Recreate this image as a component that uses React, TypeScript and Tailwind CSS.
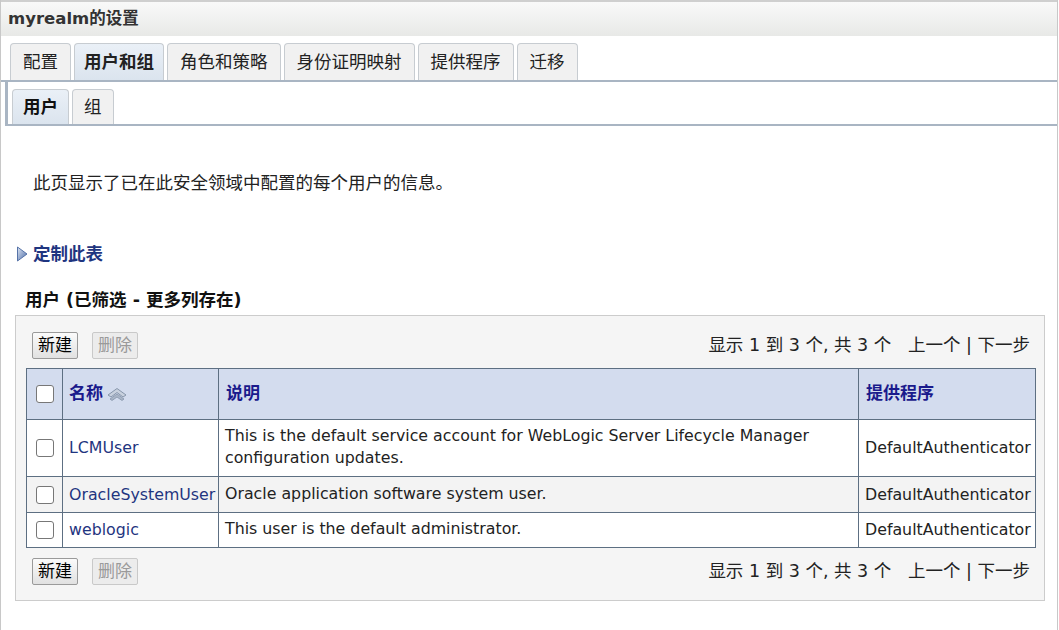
import React from "react";

const font = { fontFamily: '"DejaVu Sans", "Noto Sans CJK SC", sans-serif' };

const tabs = ["配置", "用户和组", "角色和策略", "身份证明映射", "提供程序", "迁移"];

const users = [
  {
    name: "LCMUser",
    desc: "This is the default service account for WebLogic Server Lifecycle Manager configuration updates.",
    provider: "DefaultAuthenticator",
  },
  { name: "OracleSystemUser", desc: "Oracle application software system user.", provider: "DefaultAuthenticator" },
  { name: "weblogic", desc: "This user is the default administrator.", provider: "DefaultAuthenticator" },
];

const Tab = ({ label, active }: { label: string; active?: boolean }) => (
  <div
    className={
      "h-[37px] flex items-center rounded-t-[4px] border border-b-0 border-[#c7ccd1] text-[17.5px] text-[#222] " +
      (active ? "px-[9px] bg-gradient-to-b from-[#eaf0f7] to-[#dbe4ee] font-bold text-[#111]" : "px-[12px] bg-[#f1f1f1]")
    }
  >
    {label}
  </div>
);

const Buttons = () => (
  <div className="flex items-center gap-[14px]">
    <button className="h-[27px] px-[5px] text-[17px] leading-none text-black bg-gradient-to-b from-[#fbfbfb] to-[#e1e1e1] border border-[#9a9a9a] rounded-[2px]">
      新建
    </button>
    <button className="h-[27px] px-[5px] text-[17px] leading-none text-[#9a9a9a] bg-[#ececec] border border-[#c9c9c9] rounded-[2px]">
      删除
    </button>
  </div>
);

const Pager = () => (
  <div className="text-[17.5px] text-[#222] whitespace-pre">显示 1 到 3 个, 共 3 个   上一个 | 下一步</div>
);

const Check = () => (
  <div className="w-[18px] h-[18px] border border-[#777] rounded-[3px] bg-white mx-auto" />
);

export default function App() {
  return (
    <div style={font} className="w-[1059px] h-[630px] bg-white text-[#222] overflow-hidden">
      <div className="h-full border-l border-r border-[#c8c8c8] mr-[1px] flex flex-col">
        <div className="h-[36px] shrink-0 border-t-2 border-[#cfcfcf] bg-gradient-to-b from-[#f9f9f9] to-[#e8e9e7] flex items-center px-[7px] text-[16.5px] font-bold text-[#333]">
          myrealm的设置
        </div>

        <div className="flex gap-[3px] pl-[9px] mt-[7px] border-b-2 border-[#a9b5c3]">
          {tabs.map((t, i) => (
            <Tab key={t} label={t} active={i === 1} />
          ))}
        </div>

        <div className="ml-[4px] border-l-[3px] border-[#a9b5c3] flex gap-[3px] pl-[4px] pt-[7px] border-b-2 border-b-[#a9b5c3]">
          <div className="h-[35px] px-[10px] flex items-center rounded-t-[4px] border border-b-0 border-[#c7ccd1] text-[17.5px] font-bold text-[#111] bg-gradient-to-b from-[#eaf0f7] to-[#dbe4ee]">
            用户
          </div>
          <div className="h-[35px] px-[11px] flex items-center rounded-t-[4px] border border-b-0 border-[#c7ccd1] text-[17.5px] bg-[#f1f1f1]">
            组
          </div>
        </div>

        <p className="mt-[45px] ml-[32px] h-[24px] leading-[24px] text-[17.5px] text-[#222]">
          此页显示了已在此安全领域中配置的每个用户的信息。
        </p>

        <div className="mt-[47px] ml-[15px] h-[24px] flex items-center gap-[5px]">
          <svg width="12" height="16" viewBox="0 0 12 16">
            <defs>
              <linearGradient id="tri" x1="0" y1="0" x2="1" y2="1">
                <stop offset="0" stopColor="#dfe7f4" />
                <stop offset="1" stopColor="#4a6aa5" />
              </linearGradient>
            </defs>
            <path d="M1.5 1 L11 8 L1.5 15 Z" fill="url(#tri)" stroke="#5673a8" strokeWidth="1" strokeLinejoin="round" />
          </svg>
          <span className="text-[17.5px] font-bold text-[#1f3580]">定制此表</span>
        </div>

        <div className="mt-[23px] ml-[24px] h-[22px] leading-[22px] text-[17.5px] font-bold text-[#111]">
          用户 (已筛选 - 更多列存在)
        </div>

        <div className="mt-[4px] ml-[14px] w-[1030px] bg-[#f5f5f5] border border-[#cccccc] px-[10px] pt-[16px] pb-[15px]">
          <div className="flex items-center justify-between pl-[6px] pr-[4px]">
            <Buttons />
            <Pager />
          </div>

          <table className="mt-[9px] w-[1010px] border-collapse text-[15.8px] table-fixed">
            <thead>
              <tr className="h-[51px] bg-[#d3dcee] text-[#1a1a8c] font-bold text-[17px]">
                <th className="w-[36px] border border-[#5d6f82]"><Check /></th>
                <th className="w-[156px] border border-[#5d6f82] text-left px-[6px]">
                  <span className="inline-flex items-center gap-[3px]">
                    名称
                    <svg width="22" height="14" viewBox="0 0 22 14">
                      <path d="M2 8 L11 1.5 L20 8 L17 10 L11 5.5 L5 10 Z" fill="#c8d1de" stroke="#8796ab" strokeWidth="1" strokeLinejoin="round" />
                      <path d="M4 12 L11 7 L18 12 L16 13.5 L11 10 L6 13.5 Z" fill="#aab6c7" stroke="#8796ab" strokeWidth="0.8" strokeLinejoin="round" />
                    </svg>
                  </span>
                </th>
                <th className="w-[640px] border border-[#5d6f82] text-left px-[7px]">说明</th>
                <th className="border border-[#5d6f82] text-left px-[7px]">提供程序</th>
              </tr>
            </thead>
            <tbody>
              {users.map((u, i) => (
                <tr key={u.name} className={(i === 1 ? "bg-[#f3f3f3] " : "bg-white ") + (i === 0 ? "h-[57px]" : i === 1 ? "h-[36px]" : "h-[35px]")}>
                  <td className="border border-[#5d6f82]"><Check /></td>
                  <td className="border border-[#5d6f82] px-[6px] text-[#1f3580] whitespace-nowrap">{u.name}</td>
                  <td className="border border-[#5d6f82] px-[6px] leading-[22px] pb-[2px]">{u.desc}</td>
                  <td className="border border-[#5d6f82] px-[6px] whitespace-nowrap">{u.provider}</td>
                </tr>
              ))}
            </tbody>
          </table>

          <div className="flex items-center justify-between pl-[6px] pr-[4px] mt-[10px]">
            <Buttons />
            <Pager />
          </div>
        </div>
      </div>
    </div>
  );
}
